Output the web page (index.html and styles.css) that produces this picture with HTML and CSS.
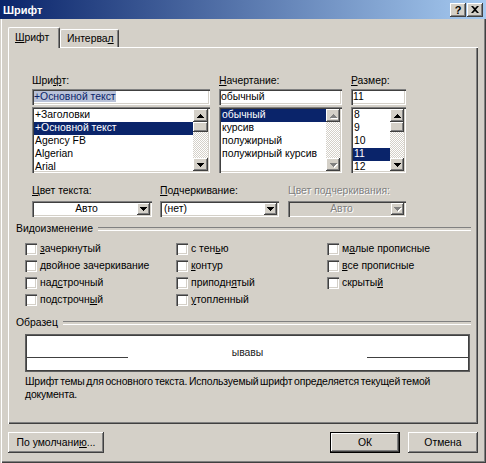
FILE: index.html
```html
<!DOCTYPE html>
<html lang="ru">

<head>
    <meta charset="UTF-8">
    <title>Шрифт</title>
    <link rel="stylesheet" href="styles.css">
</head>

<body>
    <div class="window">
        <div class="titlebar">
            <span class="title">Шрифт</span>
            <div class="caption-btns">
                <span class="cbtn">?</span>
                <span class="cbtn">
                    <svg width="8" height="7" viewBox="0 0 8 7"><path d="M0 0h2l2 2 2-2h2L5 3.5 8 7H6L4 5 2 7H0l3-3.5z" fill="#000"/></svg>
                </span>
            </div>
        </div>

        <div class="body">
            <div class="tabs">
                <div class="tab active"><u>Ш</u>рифт</div>
                <div class="tab">Интерва<u>л</u></div>
            </div>

            <div class="panel">
                <!-- font / style / size -->
                <div class="font-row">
                    <div class="field f-name">
                        <div class="label">Шри<u>ф</u>т:</div>
                        <div class="textbox"><span class="hl">+Основной текст</span></div>
                        <div class="list">
                            <div class="items">
                                <div class="item">+Заголовки</div>
                                <div class="item sel">+Основной текст</div>
                                <div class="item">Agency FB</div>
                                <div class="item">Algerian</div>
                                <div class="item">Arial</div>
                            </div>
                            <div class="scroll wide">
                                <span class="sbtn"><svg width="7" height="4"><path d="M3 0h1v1h1v1h1v1h1v1H0V3h1V2h1V1h1z"/></svg></span>
                                <span class="track"><span class="thumb"></span></span>
                                <span class="sbtn"><svg width="7" height="4"><path d="M0 0h7v1H6v1H5v1H4v1H3V3H2V2H1V1H0z"/></svg></span>
                            </div>
                        </div>
                    </div>

                    <div class="field f-style">
                        <div class="label"><u>Н</u>ачертание:</div>
                        <div class="textbox">обычный</div>
                        <div class="list">
                            <div class="items">
                                <div class="item sel">обычный</div>
                                <div class="item">курсив</div>
                                <div class="item">полужирный</div>
                                <div class="item">полужирный курсив</div>
                            </div>
                            <div class="scroll off">
                                <span class="sbtn"><svg width="7" height="4"><path d="M3 0h1v1h1v1h1v1h1v1H0V3h1V2h1V1h1z"/></svg></span>
                                <span class="track"></span>
                                <span class="sbtn"><svg width="7" height="4"><path d="M0 0h7v1H6v1H5v1H4v1H3V3H2V2H1V1H0z"/></svg></span>
                            </div>
                        </div>
                    </div>

                    <div class="field f-size">
                        <div class="label"><u>Р</u>азмер:</div>
                        <div class="textbox">11</div>
                        <div class="list">
                            <div class="items">
                                <div class="item">8</div>
                                <div class="item">9</div>
                                <div class="item">10</div>
                                <div class="item sel">11</div>
                                <div class="item">12</div>
                            </div>
                            <div class="scroll">
                                <span class="sbtn"><svg width="7" height="4"><path d="M3 0h1v1h1v1h1v1h1v1H0V3h1V2h1V1h1z"/></svg></span>
                                <span class="track"><span class="thumb"></span></span>
                                <span class="sbtn"><svg width="7" height="4"><path d="M0 0h7v1H6v1H5v1H4v1H3V3H2V2H1V1H0z"/></svg></span>
                            </div>
                        </div>
                    </div>
                </div>

                <!-- colours / underline -->
                <div class="combo-row">
                    <div class="field c-color">
                        <div class="label"><u>Ц</u>вет текста:</div>
                        <div class="combo">
                            <span class="combo-text center">Авто</span>
                            <span class="sbtn"><svg width="7" height="4"><path d="M0 0h7v1H6v1H5v1H4v1H3V3H2V2H1V1H0z"/></svg></span>
                        </div>
                    </div>
                    <div class="field c-under">
                        <div class="label"><u>П</u>одчеркивание:</div>
                        <div class="combo">
                            <span class="combo-text">(нет)</span>
                            <span class="sbtn"><svg width="7" height="4"><path d="M0 0h7v1H6v1H5v1H4v1H3V3H2V2H1V1H0z"/></svg></span>
                        </div>
                    </div>
                    <div class="field c-ucolor disabled">
                        <div class="label">Цвет подчеркивания:</div>
                        <div class="combo">
                            <span class="combo-text center">Авто</span>
                            <span class="sbtn"><svg width="7" height="4"><path d="M0 0h7v1H6v1H5v1H4v1H3V3H2V2H1V1H0z"/></svg></span>
                        </div>
                    </div>
                </div>

                <div class="group">Видоизменение</div>
                <div class="effects">
                    <div class="cb"><span class="box"></span><u>з</u>ачеркнутый</div>
                    <div class="cb"><span class="box"></span><u>д</u>войное зачеркивание</div>
                    <div class="cb"><span class="box"></span>над<u>с</u>трочный</div>
                    <div class="cb"><span class="box"></span>подстрочн<u>ы</u>й</div>
                    <div class="cb"><span class="box"></span>с тен<u>ь</u>ю</div>
                    <div class="cb"><span class="box"></span><u>к</u>онтур</div>
                    <div class="cb"><span class="box"></span>приподн<u>я</u>тый</div>
                    <div class="cb"><span class="box"></span><u>у</u>топленный</div>
                    <div class="cb"><span class="box"></span>м<u>а</u>лые прописные</div>
                    <div class="cb"><span class="box"></span><u>в</u>се прописные</div>
                    <div class="cb"><span class="box"></span>скрыты<u>й</u></div>
                </div>

                <div class="group sample">Образец</div>
                <div class="preview">
                    <span class="pline"></span>
                    <span class="ptext">ывавы</span>
                    <span class="pline"></span>
                </div>
                <p class="desc">Шрифт темы для основного текста. Используемый шрифт определяется текущей темой<br>документа.</p>
            </div>

            <div class="buttons">
                <button class="btn b-default">По умолчани<u>ю</u>...</button>
                <button class="btn b-ok">ОК</button>
                <button class="btn b-cancel">Отмена</button>
            </div>
        </div>
    </div>
</body>

</html>
```

FILE: styles.css
```css
* {
    box-sizing: border-box;
}

body {
    margin: 0;
    background: #d4d0c8;
    font-family: "Liberation Sans", Arial, sans-serif;
    font-size: 10.4px;
    color: #000;
}

u {
    text-decoration: underline;
}

.window {
    width: 486px;
    height: 463px;
    background: #d4d0c8;
    overflow: hidden;
    box-shadow: inset 1px 0 #d4d0c8, inset 2px 0 #fff, inset -1px -1px #404040, inset -2px -2px #808080;
}

/* title bar */

.titlebar {
    height: 19px;
    display: flex;
    align-items: center;
    justify-content: space-between;
    padding: 0 3px 0 3px;
    background: linear-gradient(to right, #0a246a, #a6caf0);
    color: #fff;
    font-size: 11px;
    font-weight: bold;
}

.caption-btns {
    display: flex;
    gap: 1px;
}

.cbtn {
    width: 16px;
    height: 14px;
    display: flex;
    align-items: center;
    justify-content: center;
    background: #d4d0c8;
    color: #000;
    font-size: 11px;
    font-weight: bold;
    box-shadow: inset -1px -1px #404040, inset 1px 1px #fff, inset -2px -2px #808080;
}

.body {
    padding: 8px 8px 0;
}

/* tabs */

.tabs {
    display: flex;
    align-items: flex-end;
    height: 20px;
}

.tab {
    height: 18px;
    padding: 2px 0 0 6px;
    border-top: 1px solid #fff;
    border-left: 1px solid #fff;
    border-radius: 2px 2px 0 0;
    box-shadow: inset -1px 0 #808080;
    border-right: 1px solid #404040;
    width: 59px;
    white-space: nowrap;
    line-height: 13px;
}

.tab.active {
    position: relative;
    z-index: 1;
    width: 52px;
    height: 21px;
    margin-bottom: -1px;
    padding-top: 3px;
    background: #d4d0c8;
}

.panel {
    height: 377px;
    border-top: 1px solid #fff;
    border-left: 1px solid #fff;
    box-shadow: inset -1px -1px #404040, inset -2px -2px #808080;
    padding: 26px 7px 0 7px;
}

.label {
    height: 13px;
    line-height: 13px;
    white-space: nowrap;
}

/* font / style / size */

.font-row {
    display: flex;
    margin-left: 16px;
}

.font-row .label {
    margin-bottom: 2px;
}

.f-name {
    width: 178px;
    margin-right: 9px;
}

.f-style {
    width: 123px;
    margin-right: 9px;
}

.f-size {
    width: 55px;
}

.textbox,
.list,
.combo {
    background: #fff;
    box-shadow: inset 1px 1px #808080, inset 2px 2px #404040, inset -1px -1px #fff, inset -2px -2px #d4d0c8;
}

.textbox {
    height: 16px;
    padding: 2px 2px 0 2px;
    line-height: 12px;
    white-space: nowrap;
}

.hl {
    background: #b9c2d8;
    color: #0a246a;
}

.list {
    height: 66px;
    margin-top: 2px;
    padding: 2px;
    display: flex;
}

.items {
    flex: 1;
    overflow: hidden;
}

.item {
    height: 13px;
    line-height: 12px;
    padding-left: 1px;
    white-space: nowrap;
}

.item.sel {
    background: #0a246a;
    color: #fff;
}

.scroll {
    width: 14px;
    display: flex;
    flex-direction: column;
}

.scroll.wide {
    width: 15px;
}

.sbtn {
    height: 13px;
    flex-shrink: 0;
    display: flex;
    align-items: center;
    justify-content: center;
    background: #d4d0c8;
    box-shadow: inset -1px -1px #404040, inset 1px 1px #fff, inset -2px -2px #808080;
}

.sbtn svg {
    fill: #000;
}

.scroll.off .sbtn svg,
.disabled .sbtn svg {
    fill: #808080;
    filter: drop-shadow(1px 1px 0 #fff);
}

.track {
    flex: 1;
    background: repeating-conic-gradient(#d4d0c8 0 25%, #fff 0 50%) 0 0 / 2px 2px;
}

.thumb {
    display: block;
    height: 10px;
    background: #d4d0c8;
    box-shadow: inset -1px -1px #404040, inset 1px 1px #fff, inset -2px -2px #808080;
}

/* combos */

.combo-row {
    display: flex;
    margin: 11px 0 0 16px;
}

.c-color {
    width: 120px;
    margin-right: 8px;
}

.c-under {
    width: 119px;
    margin-right: 9px;
}

.c-ucolor {
    width: 118px;
}

.combo {
    height: 16px;
    margin-top: 4px;
    padding: 2px;
    display: flex;
}

.combo .sbtn {
    width: 13px;
    height: 12px;
}

.combo-text {
    flex: 1;
    line-height: 12px;
    padding-left: 2px;
    white-space: nowrap;
}

.combo-text.center {
    text-align: center;
}

.disabled .label,
.disabled .combo-text {
    color: #808080;
    text-shadow: 1px 1px 0 #fff;
}

.disabled .combo {
    background: #d4d0c8;
}

/* groups */

.group {
    display: flex;
    align-items: center;
    height: 13px;
    line-height: 13px;
    margin-top: 5px;
    white-space: nowrap;
}

.group::after {
    content: "";
    flex: 1;
    height: 2px;
    margin-left: 5px;
    border-top: 1px solid #808080;
    border-bottom: 1px solid #fff;
}

.group.sample {
    margin-top: 8px;
}

.effects {
    display: grid;
    grid-template-columns: repeat(3, 151px);
    grid-template-rows: repeat(4, 17px);
    grid-auto-flow: column;
    margin: 5px 0 0 9px;
}

.cb {
    display: flex;
    align-items: center;
    white-space: nowrap;
}

.box {
    width: 12px;
    height: 12px;
    margin-right: 3px;
    background: #fff;
    box-shadow: inset 1px 1px #808080, inset 2px 2px #404040, inset -1px -1px #fff, inset -2px -2px #d4d0c8;
}

/* sample */

.preview {
    display: flex;
    width: 445px;
    height: 38px;
    margin: 5px 0 0 9px;
    background: #fff;
    border: 1px solid #606060;
    box-shadow: inset 0 0 0 1px #404040;
    padding: 0 1px;
}

.pline {
    width: 101px;
    height: 1px;
    margin-top: 22px;
    background: #404040;
}

.ptext {
    flex: 1;
    text-align: center;
    margin-top: 11px;
    line-height: 13px;
    color: #222;
}

.desc {
    margin: 3px 0 0 9px;
    line-height: 13px;
    white-space: nowrap;
    word-spacing: -1px;
    letter-spacing: -0.15px;
}

/* bottom buttons */

.buttons {
    display: flex;
    margin-top: 8px;
}

.btn {
    height: 21px;
    padding: 0;
    border: none;
    background: #d4d0c8;
    font-family: inherit;
    font-size: 10.4px;
    color: #000;
    box-shadow: inset -1px -1px #404040, inset 1px 1px #fff, inset -2px -2px #808080;
}

.b-default {
    width: 96px;
}

.b-ok {
    width: 70px;
    margin-left: auto;
    border: 1px solid #000;
}

.b-cancel {
    width: 70px;
    margin-left: 8px;
}
```
